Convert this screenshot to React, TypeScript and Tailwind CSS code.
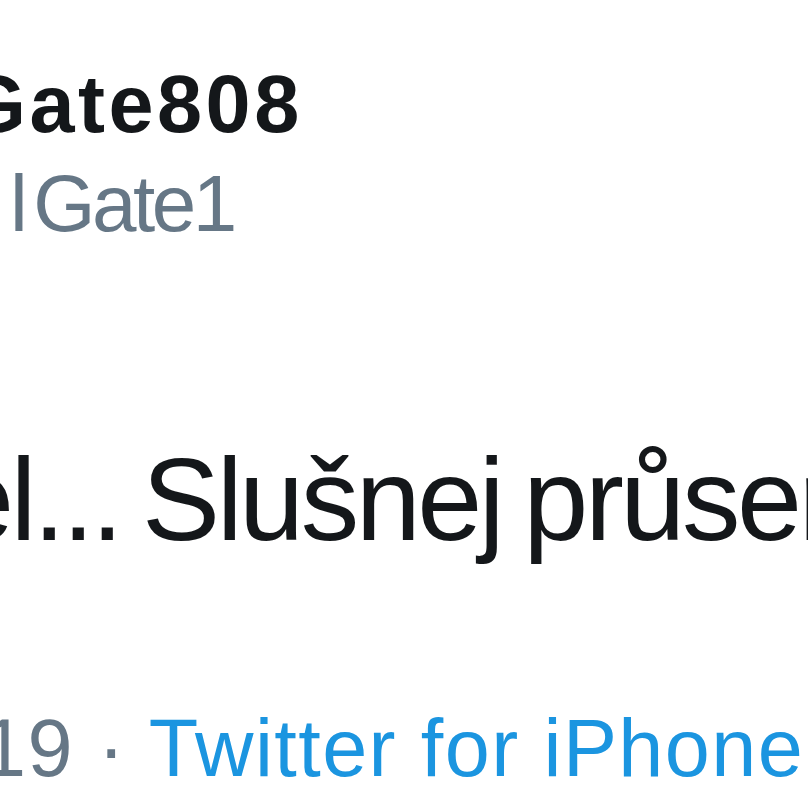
import React from "react";

export default function App() {
  return (
    <div
      className="w-[808px] h-[808px] overflow-hidden bg-white whitespace-nowrap"
      style={{ fontFamily: '"Liberation Sans", Arial, sans-serif' }}
    >
      <div className="flex flex-col pt-[64px]">
        <div className="ml-[-37px] text-[81px] leading-none font-bold tracking-[3.5px] text-[#14171a]">Gate808</div>
        <div className="ml-[10px] mt-[19px] text-[80px] leading-none tracking-[-3.5px] text-[#667786]">
          <span className="mr-[9px]">l</span>Gate1
        </div>
        <div className="ml-[-51px] mt-[197px] text-[117px] leading-none tracking-[-3.5px] [word-spacing:-7px] text-[#14171a]">
          el... Slušnej průser
        </div>
        <div className="ml-[-19px] mt-[150px] text-[81px] leading-none tracking-[1.4px] text-[#667786]">
          19 · <span className="text-[#1b95e0]">Twitter for iPhone</span>
        </div>
      </div>
    </div>
  );
}
